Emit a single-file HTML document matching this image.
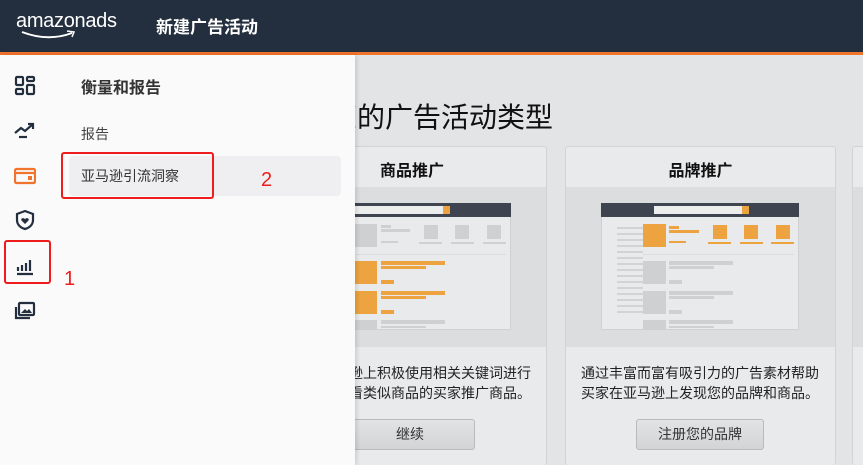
<!DOCTYPE html>
<html><head><meta charset="utf-8">
<style>
*{margin:0;padding:0;box-sizing:border-box}
html,body{width:863px;height:465px;overflow:hidden}
body{background:#e3e4e6;font-family:"Liberation Sans","Noto Sans CJK SC",sans-serif;position:relative}
.a{position:absolute}
.hdr{left:0;top:0;width:863px;height:52px;background:#232f3e}
.org{left:0;top:52px;width:863px;height:3px;background:#f0742b}
.card{background:#e9eaec;border:1px solid #d2d3d5;border-radius:3px;top:146px;height:319px;border-bottom:none}
.ch{font-size:16px;font-weight:bold;color:#111;text-align:center;width:100%;top:10px}
.img{left:0;top:40px;width:100%;height:160px;background:#dcdddf}
.mock{background:#e9eaec;border:1px solid #cfd0d2}
.g{background:#cfd0d2}.o{background:#eda33f}
.txt{font-size:14px;color:#222;white-space:nowrap;line-height:20px}
.btn{top:272px;height:31px;border:1px solid #b9babc;border-radius:3px;background:linear-gradient(#e2e3e5,#d3d4d6);font-size:14px;color:#333;text-align:center;line-height:29px}
.side{left:0;top:55px;width:355px;height:410px;background:#fafafa;box-shadow:2px 0 4px rgba(0,0,0,.12)}
.ico{left:14px;width:22px;height:22px}
.red{border:2px solid #ee1c1c;border-radius:3px}
</style></head><body>
<div class="a hdr"></div>
<div class="a org"></div>
<div class="a" style="left:16px;top:10px;color:#fff;font-size:20px;letter-spacing:-0.3px">amazonads</div>
<svg class="a" style="left:20px;top:30px" width="60" height="10"><path d="M2 2 Q28 12 52 3" stroke="#fff" stroke-width="2" fill="none"/><path d="M47 1 L54 2 L52 7" stroke="#fff" stroke-width="1.5" fill="none"/></svg>
<div class="a" style="left:156px;top:13px;color:#fff;font-size:17px;font-weight:bold">新建广告活动</div>

<div class="a" style="left:273px;top:96px;font-size:28px;color:#111;white-space:nowrap">选择您的广告活动类型</div>

<!-- card 1 -->
<div class="a card" style="left:277px;width:270px">
 <div class="a ch">商品推广</div>
 <div class="a img"></div>
</div>
<div class="a mock" style="left:313px;top:203px;width:198px;height:127px"></div>
<div class="a" style="left:313px;top:203px;width:198px;height:14px;background:#3f4550"></div>
<div class="a" style="left:355px;top:206px;width:88px;height:8px;background:#eceded"></div>
<div class="a o" style="left:443px;top:206px;width:7px;height:8px"></div>
<div class="a g" style="left:355px;top:224px;width:22px;height:23px"></div>
<div class="a g" style="left:381px;top:225px;width:10px;height:3px"></div>
<div class="a g" style="left:381px;top:229px;width:29px;height:3px"></div>
<div class="a g" style="left:381px;top:241px;width:17px;height:2px"></div>
<div class="a g" style="left:424px;top:225px;width:14px;height:14px"></div>
<div class="a g" style="left:455px;top:225px;width:14px;height:14px"></div>
<div class="a g" style="left:487px;top:225px;width:14px;height:14px"></div>
<div class="a g" style="left:419px;top:242px;width:23px;height:2px"></div>
<div class="a g" style="left:451px;top:242px;width:23px;height:2px"></div>
<div class="a g" style="left:483px;top:242px;width:23px;height:2px"></div>
<div class="a" style="left:355px;top:254px;width:151px;height:1px;background:#dcdddf"></div>
<div class="a o" style="left:355px;top:261px;width:22px;height:23px"></div>
<div class="a o" style="left:381px;top:261px;width:64px;height:4px"></div>
<div class="a o" style="left:381px;top:266px;width:45px;height:3px"></div>
<div class="a o" style="left:381px;top:280px;width:13px;height:4px"></div>
<div class="a o" style="left:355px;top:291px;width:22px;height:23px"></div>
<div class="a o" style="left:381px;top:291px;width:64px;height:4px"></div>
<div class="a o" style="left:381px;top:296px;width:45px;height:3px"></div>
<div class="a o" style="left:381px;top:310px;width:13px;height:4px"></div>
<div class="a g" style="left:355px;top:320px;width:22px;height:10px"></div>
<div class="a g" style="left:381px;top:320px;width:64px;height:4px"></div>
<div class="a g" style="left:381px;top:326px;width:45px;height:2px"></div>
<div class="a txt" style="right:332px;top:363px">通过在亚马逊上积极使用相关关键词进行</div>
<div class="a txt" style="right:332px;top:383px">向查看类似商品的买家推广商品。</div>
<div class="a btn" style="left:345px;width:130px;top:419px">继续</div>

<!-- card 2 -->
<div class="a card" style="left:565px;width:271px">
 <div class="a ch">品牌推广</div>
 <div class="a img"></div>
</div>
<div class="a mock" style="left:601px;top:203px;width:198px;height:127px"></div>
<div class="a" style="left:601px;top:203px;width:198px;height:14px;background:#3f4550"></div>
<div class="a" style="left:654px;top:206px;width:88px;height:8px;background:#eceded"></div>
<div class="a o" style="left:742px;top:206px;width:7px;height:8px"></div>
<div class="a" style="left:617px;top:227px;width:26px;height:88px;background:repeating-linear-gradient(#d2d3d5 0 2px,transparent 2px 6px)"></div>
<div class="a o" style="left:643px;top:224px;width:23px;height:23px"></div>
<div class="a o" style="left:669px;top:226px;width:10px;height:3px"></div>
<div class="a o" style="left:669px;top:230px;width:30px;height:3px"></div>
<div class="a o" style="left:669px;top:241px;width:17px;height:2px"></div>
<div class="a o" style="left:713px;top:225px;width:14px;height:14px"></div>
<div class="a o" style="left:744px;top:225px;width:14px;height:14px"></div>
<div class="a o" style="left:776px;top:225px;width:14px;height:14px"></div>
<div class="a o" style="left:708px;top:242px;width:23px;height:2px"></div>
<div class="a o" style="left:740px;top:242px;width:23px;height:2px"></div>
<div class="a o" style="left:771px;top:242px;width:23px;height:2px"></div>
<div class="a" style="left:643px;top:254px;width:151px;height:1px;background:#dcdddf"></div>
<div class="a g" style="left:643px;top:261px;width:23px;height:23px"></div>
<div class="a g" style="left:669px;top:261px;width:64px;height:4px"></div>
<div class="a g" style="left:669px;top:266px;width:45px;height:3px"></div>
<div class="a g" style="left:669px;top:280px;width:13px;height:4px"></div>
<div class="a g" style="left:643px;top:291px;width:23px;height:23px"></div>
<div class="a g" style="left:669px;top:291px;width:64px;height:4px"></div>
<div class="a g" style="left:669px;top:296px;width:45px;height:3px"></div>
<div class="a g" style="left:669px;top:310px;width:13px;height:4px"></div>
<div class="a g" style="left:643px;top:320px;width:23px;height:10px"></div>
<div class="a g" style="left:669px;top:320px;width:64px;height:4px"></div>
<div class="a g" style="left:669px;top:326px;width:45px;height:2px"></div>
<div class="a txt" style="left:581px;top:363px">通过丰富而富有吸引力的广告素材帮助</div>
<div class="a txt" style="left:581px;top:383px">买家在亚马逊上发现您的品牌和商品。</div>
<div class="a btn" style="left:636px;width:128px;top:419px">注册您的品牌</div>

<!-- card 3 -->
<div class="a card" style="left:852px;width:271px"><div class="a img"></div></div>

<!-- sidebar -->
<div class="a side"></div>
<svg class="a ico" style="top:75px" viewBox="0 0 22 22" fill="none" stroke="#232f3e" stroke-width="2.2"><rect x="2" y="2" width="7" height="8" rx="1"/><rect x="13" y="2" width="7" height="4" rx="1"/><rect x="2" y="14" width="7" height="5" rx="1"/><rect x="13" y="10" width="7" height="9" rx="1"/></svg>
<svg class="a ico" style="top:120px" viewBox="0 0 22 22" fill="none" stroke="#232f3e" stroke-width="2.2"><path d="M1 13 L7 8 L11 11 L19 4 M14 4 H19 V9"/><path d="M5 17 H13"/></svg>
<svg class="a ico" style="top:165px" viewBox="0 0 22 22" fill="none" stroke="#f0742b" stroke-width="2.2"><rect x="1" y="4" width="20" height="14" rx="1.5"/><path d="M1 8 H21"/><rect x="14" y="11" width="4" height="4" fill="#f0742b" stroke="none"/></svg>
<svg class="a ico" style="top:209px" viewBox="0 0 22 22" fill="none" stroke="#232f3e" stroke-width="2.2"><path d="M11 2 L19 5 V11 C19 16 15 19 11 20 C7 19 3 16 3 11 V5 Z"/><path d="M11 15 L7.5 11.5 C6.5 10 8.5 8 11 10 C13.5 8 15.5 10 14.5 11.5 Z" fill="#232f3e" stroke="none"/></svg>
<svg class="a ico" style="top:255px" viewBox="0 0 22 22" fill="none" stroke="#232f3e" stroke-width="2.2"><path d="M4 12 V16 M8 10 V16 M12 8 V16 M16 5 V16 M3 19 H19"/></svg>
<svg class="a ico" style="top:300px" viewBox="0 0 22 22" fill="none" stroke="#232f3e" stroke-width="2.2"><rect x="5" y="3" width="15" height="12" rx="1"/><path d="M2 7 V18 H16"/><path d="M7 13 L11 9 L13 11 L15 9 L18 13 Z" fill="#232f3e" stroke="none"/></svg>
<div class="a red" style="left:4px;top:240px;width:47px;height:44px"></div>
<div class="a" style="left:64px;top:268px;font-size:20px;color:#ee1c1c">1</div>

<div class="a" style="left:81px;top:74px;font-size:16px;font-weight:bold;color:#333">衡量和报告</div>
<div class="a" style="left:81px;top:124px;font-size:14px;color:#444">报告</div>
<div class="a" style="left:69px;top:156px;width:272px;height:40px;background:#efeff1;border-radius:4px"></div>
<div class="a" style="left:81px;top:166px;font-size:14px;color:#333">亚马逊引流洞察</div>
<div class="a red" style="left:61px;top:152px;width:153px;height:47px"></div>
<div class="a" style="left:261px;top:169px;font-size:20px;color:#ee1c1c">2</div>
</body></html>
